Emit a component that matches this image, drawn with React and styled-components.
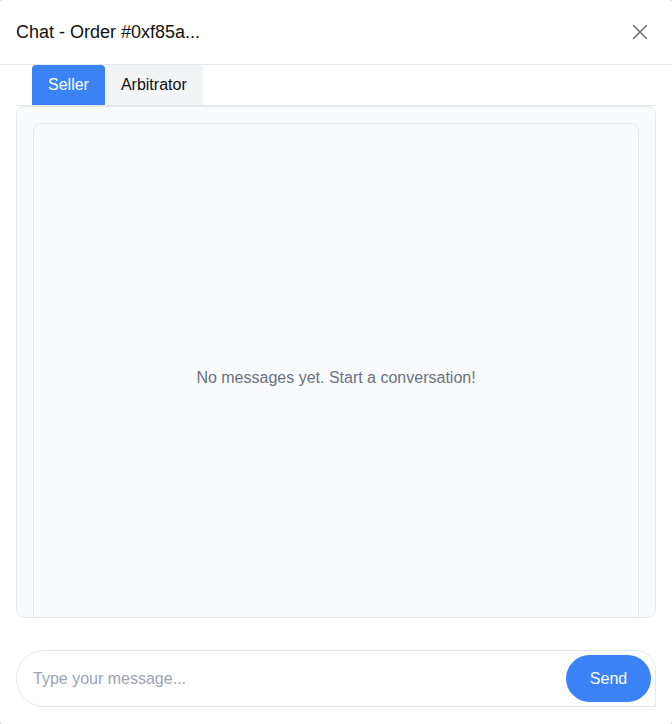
import React, { useState } from "react";
import styled, { createGlobalStyle } from "styled-components";

const Global = createGlobalStyle`
  html, body { margin: 0; padding: 0; background: #d1d5db; }
  body { font-family: "Liberation Sans", Arial, sans-serif; }
  * { box-sizing: border-box; }
`;

const Modal = styled.div`
  width: 672px;
  height: 724px;
  background: #ffffff;
  border-radius: 3px;
  display: flex;
  flex-direction: column;
  overflow: hidden;
`;

const Header = styled.header`
  height: 65px;
  flex-shrink: 0;
  display: flex;
  align-items: center;
  justify-content: space-between;
  padding: 0 16px;
  border-bottom: 1px solid #e5e7eb;
`;

const Title = styled.h2`
  margin: 0;
  font-size: 18px;
  font-weight: 400;
  color: #111111;
`;

const CloseButton = styled.button`
  width: 28px;
  height: 28px;
  border: none;
  background: transparent;
  padding: 0;
  margin-right: 2px;
  display: flex;
  align-items: center;
  justify-content: center;
  color: #6b7280;
  cursor: pointer;
`;

const TabList = styled.div`
  display: flex;
  margin: 0 16px;
  padding-left: 16px;
  border-bottom: 1px solid #e5e7eb;
`;

const Tab = styled.button`
  height: 40px;
  padding: 0 16px;
  border: none;
  border-radius: 4px 4px 0 0;
  font-family: inherit;
  font-size: 16px;
  background: ${(p) => (p.$active ? "#3b82f6" : "#f3f4f6")};
  color: ${(p) => (p.$active ? "#ffffff" : "#111111")};
  cursor: pointer;
`;

const Panel = styled.div`
  margin: 0 16px;
  height: 512px;
  flex-shrink: 0;
  background: #f9fafb;
  border: 1px solid #e5e7eb;
  border-radius: 8px;
  padding: 16px 16px 0;
  overflow: hidden;
`;

const Messages = styled.div`
  height: 510px;
  border: 1px solid #e5e7eb;
  border-radius: 8px;
  background: #f9fafb;
  display: flex;
  align-items: center;
  justify-content: center;
`;

const Empty = styled.p`
  margin: 0;
  font-size: 16px;
  color: #6b7280;
`;

const Composer = styled.form`
  margin: 32px 16px 0;
  height: 57px;
  display: flex;
  align-items: center;
  padding: 4px 4px 4px 16px;
  border: 1px solid #e5e7eb;
  border-radius: 28px 20px 0 28px;
  background: #ffffff;
`;

const Input = styled.input`
  flex: 1;
  border: none;
  outline: none;
  background: transparent;
  font-family: inherit;
  font-size: 16px;
  color: #111111;
  padding: 0;
  &::placeholder { color: #9ca3af; }
`;

const SendButton = styled.button`
  width: 85px;
  height: 47px;
  border: none;
  border-radius: 24px;
  background: #3b82f6;
  color: #ffffff;
  font-family: inherit;
  font-size: 16px;
  cursor: pointer;
`;

export default function App() {
  const [tab, setTab] = useState("seller");
  return (
    <>
      <Global />
      <Modal>
        <Header>
          <Title>Chat - Order #0xf85a...</Title>
          <CloseButton aria-label="Close">
            <svg width="16" height="16" viewBox="0 0 16 16" fill="none" stroke="currentColor" strokeWidth="1.6" strokeLinecap="round">
              <line x1="1.5" y1="1.5" x2="14.5" y2="14.5" />
              <line x1="14.5" y1="1.5" x2="1.5" y2="14.5" />
            </svg>
          </CloseButton>
        </Header>
        <TabList>
          <Tab $active={tab === "seller"} onClick={() => setTab("seller")}>Seller</Tab>
          <Tab $active={tab === "arbitrator"} onClick={() => setTab("arbitrator")}>Arbitrator</Tab>
        </TabList>
        <Panel>
          <Messages>
            <Empty>No messages yet. Start a conversation!</Empty>
          </Messages>
        </Panel>
        <Composer onSubmit={(e) => e.preventDefault()}>
          <Input placeholder="Type your message..." />
          <SendButton type="submit">Send</SendButton>
        </Composer>
      </Modal>
    </>
  );
}
